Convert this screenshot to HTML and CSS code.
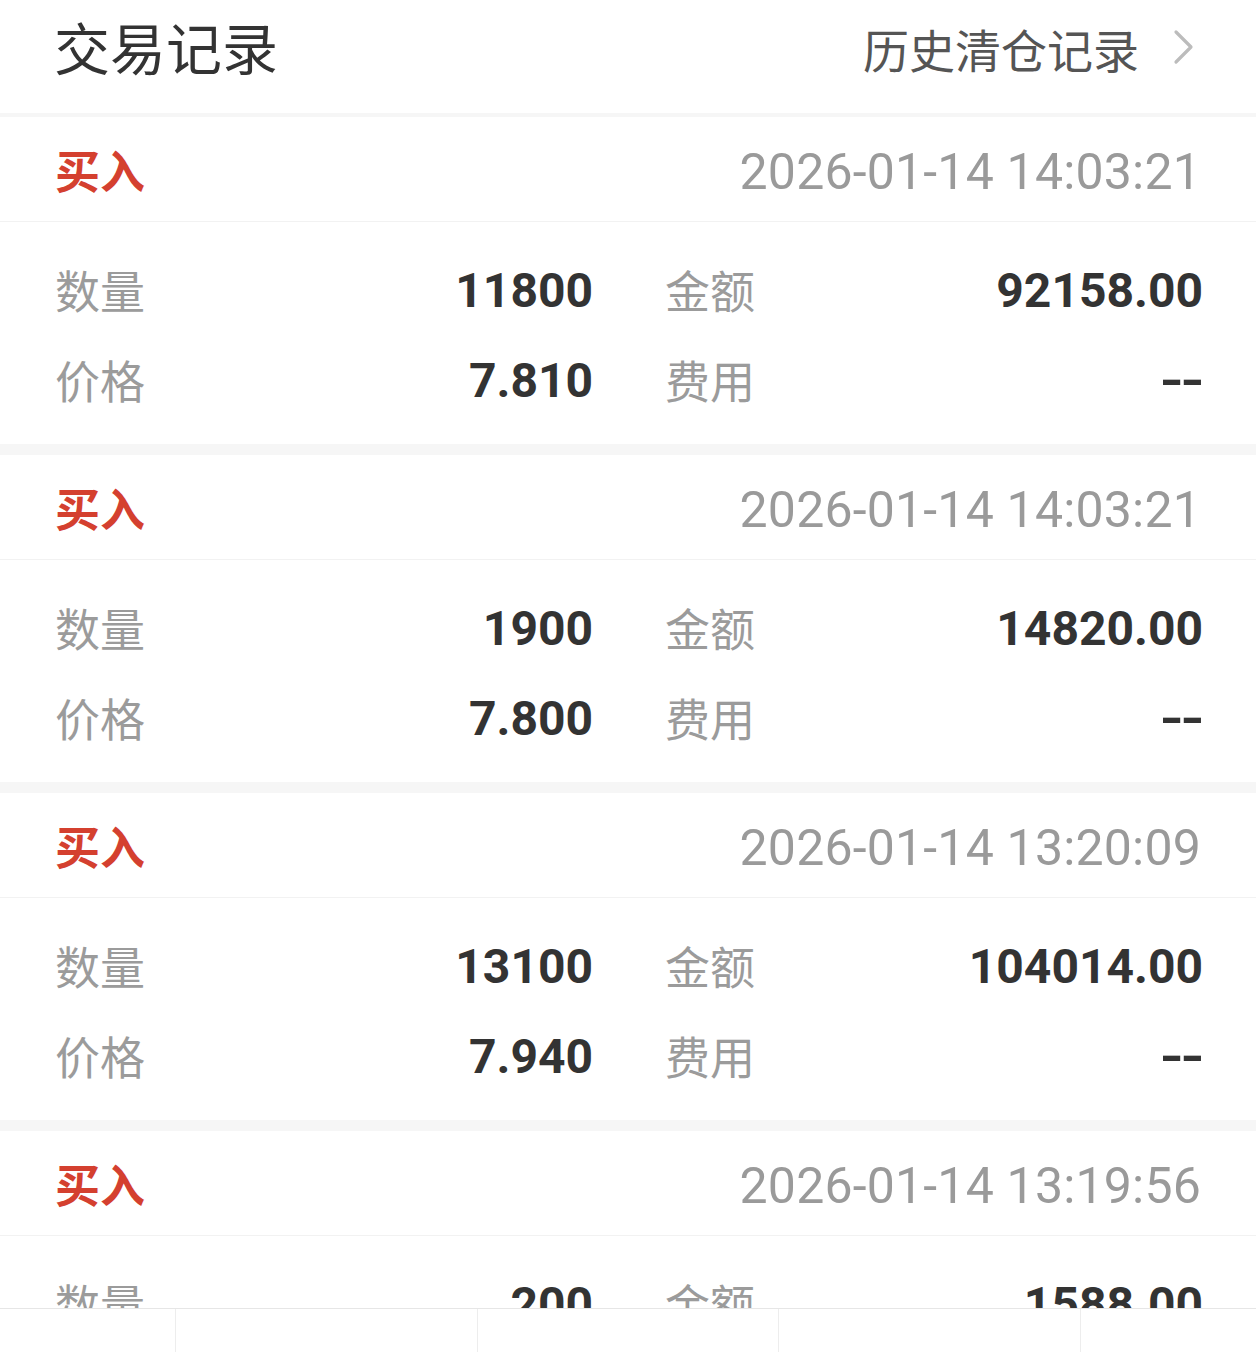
FILE: index.html
```html
<!DOCTYPE html>
<html lang="zh-CN">
<head>
<meta charset="utf-8">
<title>交易记录</title>
<link rel="stylesheet" href="styles.css">
</head>
<body>
<div class="page">
  <header class="top">
    <h1 class="title">交易记录</h1>
    <a class="history">历史清仓记录<svg class="chev" width="24" height="36" viewBox="0 0 24 36"><path d="M4 3 L19 18 L4 33" fill="none" stroke="#bcbcbc" stroke-width="3.2" stroke-linecap="round" stroke-linejoin="round"/></svg></a>
  </header>

  <section class="card">
    <div class="card-head"><span class="side">买入</span><span class="time">2026-01-14 14:03:21</span></div>
    <div class="card-body">
      <div class="cell"><span class="lbl">数量</span><span class="val">11800</span></div>
      <div class="cell"><span class="lbl">金额</span><span class="val">92158.00</span></div>
      <div class="cell"><span class="lbl">价格</span><span class="val">7.810</span></div>
      <div class="cell"><span class="lbl">费用</span><span class="val dash">--</span></div>
    </div>
  </section>

  <section class="card">
    <div class="card-head"><span class="side">买入</span><span class="time">2026-01-14 14:03:21</span></div>
    <div class="card-body">
      <div class="cell"><span class="lbl">数量</span><span class="val">1900</span></div>
      <div class="cell"><span class="lbl">金额</span><span class="val">14820.00</span></div>
      <div class="cell"><span class="lbl">价格</span><span class="val">7.800</span></div>
      <div class="cell"><span class="lbl">费用</span><span class="val dash">--</span></div>
    </div>
  </section>

  <section class="card">
    <div class="card-head"><span class="side">买入</span><span class="time">2026-01-14 13:20:09</span></div>
    <div class="card-body">
      <div class="cell"><span class="lbl">数量</span><span class="val">13100</span></div>
      <div class="cell"><span class="lbl">金额</span><span class="val">104014.00</span></div>
      <div class="cell"><span class="lbl">价格</span><span class="val">7.940</span></div>
      <div class="cell"><span class="lbl">费用</span><span class="val dash">--</span></div>
    </div>
  </section>

  <section class="card">
    <div class="card-head"><span class="side">买入</span><span class="time">2026-01-14 13:19:56</span></div>
    <div class="card-body">
      <div class="cell"><span class="lbl">数量</span><span class="val">200</span></div>
      <div class="cell"><span class="lbl">金额</span><span class="val">1588.00</span></div>
      <div class="cell"><span class="lbl">价格</span><span class="val">7.940</span></div>
      <div class="cell"><span class="lbl">费用</span><span class="val dash">--</span></div>
    </div>
  </section>
</div>

<nav class="bottom">
  <div class="bcell first"></div>
  <div class="bcell"></div>
  <div class="bcell"></div>
  <div class="bcell"></div>
  <div class="bcell"></div>
</nav>
</body>
</html>
```

FILE: styles.css
```css
html, body {
  margin: 0;
  padding: 0;
  background: #f6f6f6;
}
body {
  font-family: Roboto, "Noto Sans CJK SC", sans-serif;
  color: #333;
}
.page {
  display: flex;
  flex-direction: column;
  gap: 11px;
}
.top {
  height: 113px;
  box-sizing: border-box;
  background: #fff;
  display: flex;
  align-items: center;
  justify-content: space-between;
  padding: 0 60px 22px 54px;
  margin-bottom: -7px;
}
.title {
  margin: 0;
  font-family: "Noto Sans CJK SC", sans-serif;
  font-weight: 400;
  font-size: 56px;
  line-height: 1;
  color: #333;
}
.history {
  display: flex;
  align-items: center;
  gap: 33px;
  font-family: "Noto Sans CJK SC", sans-serif;
  font-size: 46px;
  line-height: 1;
  color: #555;
  padding-top: 4px;
}
.chev {
  display: block;
  margin-top: -2px;
}
.card {
  background: #fff;
}
.card-head {
  height: 105px;
  box-sizing: border-box;
  border-bottom: 1px solid #f2f2f2;
  display: flex;
  align-items: center;
  justify-content: space-between;
  padding: 0 55px 0 55px;
}
.side {
  font-family: "Noto Sans CJK SC", sans-serif;
  font-weight: 700;
  font-size: 45px;
  color: #d4402f;
  line-height: 1;
}
.time {
  font-family: Roboto, sans-serif;
  font-size: 50px;
  color: #9a9a9a;
  line-height: 1;
  padding-top: 5px;
  letter-spacing: 0.2px;
}
.card-body {
  display: grid;
  grid-template-columns: 1fr 1fr;
  column-gap: 74px;
  padding: 22px 55px 20px 55px;
}
.cell {
  height: 90px;
  display: flex;
  align-items: center;
  justify-content: space-between;
}
.lbl {
  font-family: "Noto Sans CJK SC", sans-serif;
  font-size: 45px;
  color: #9b9b9b;
  line-height: 1;
}
.val {
  font-family: Roboto, sans-serif;
  font-weight: 700;
  font-size: 48px;
  color: #333;
  line-height: 1;
  margin-right: -2px;
  padding-top: 3px;
}
.val.dash {
  display: inline-block;
  letter-spacing: -3px;
  transform: scaleX(1.3);
  transform-origin: right center;
  margin-right: 0;
}
.bottom {
  position: fixed;
  left: 0;
  right: 0;
  bottom: 0;
  height: 43px;
  background: #fff;
  border-top: 1px solid #e6e6e6;
  display: grid;
  grid-template-columns: 175px 1fr 1fr 1fr 176px;
}
.bcell {
  border-left: 1px solid #ededed;
}
.bcell.first {
  border-left: none;
}
```
